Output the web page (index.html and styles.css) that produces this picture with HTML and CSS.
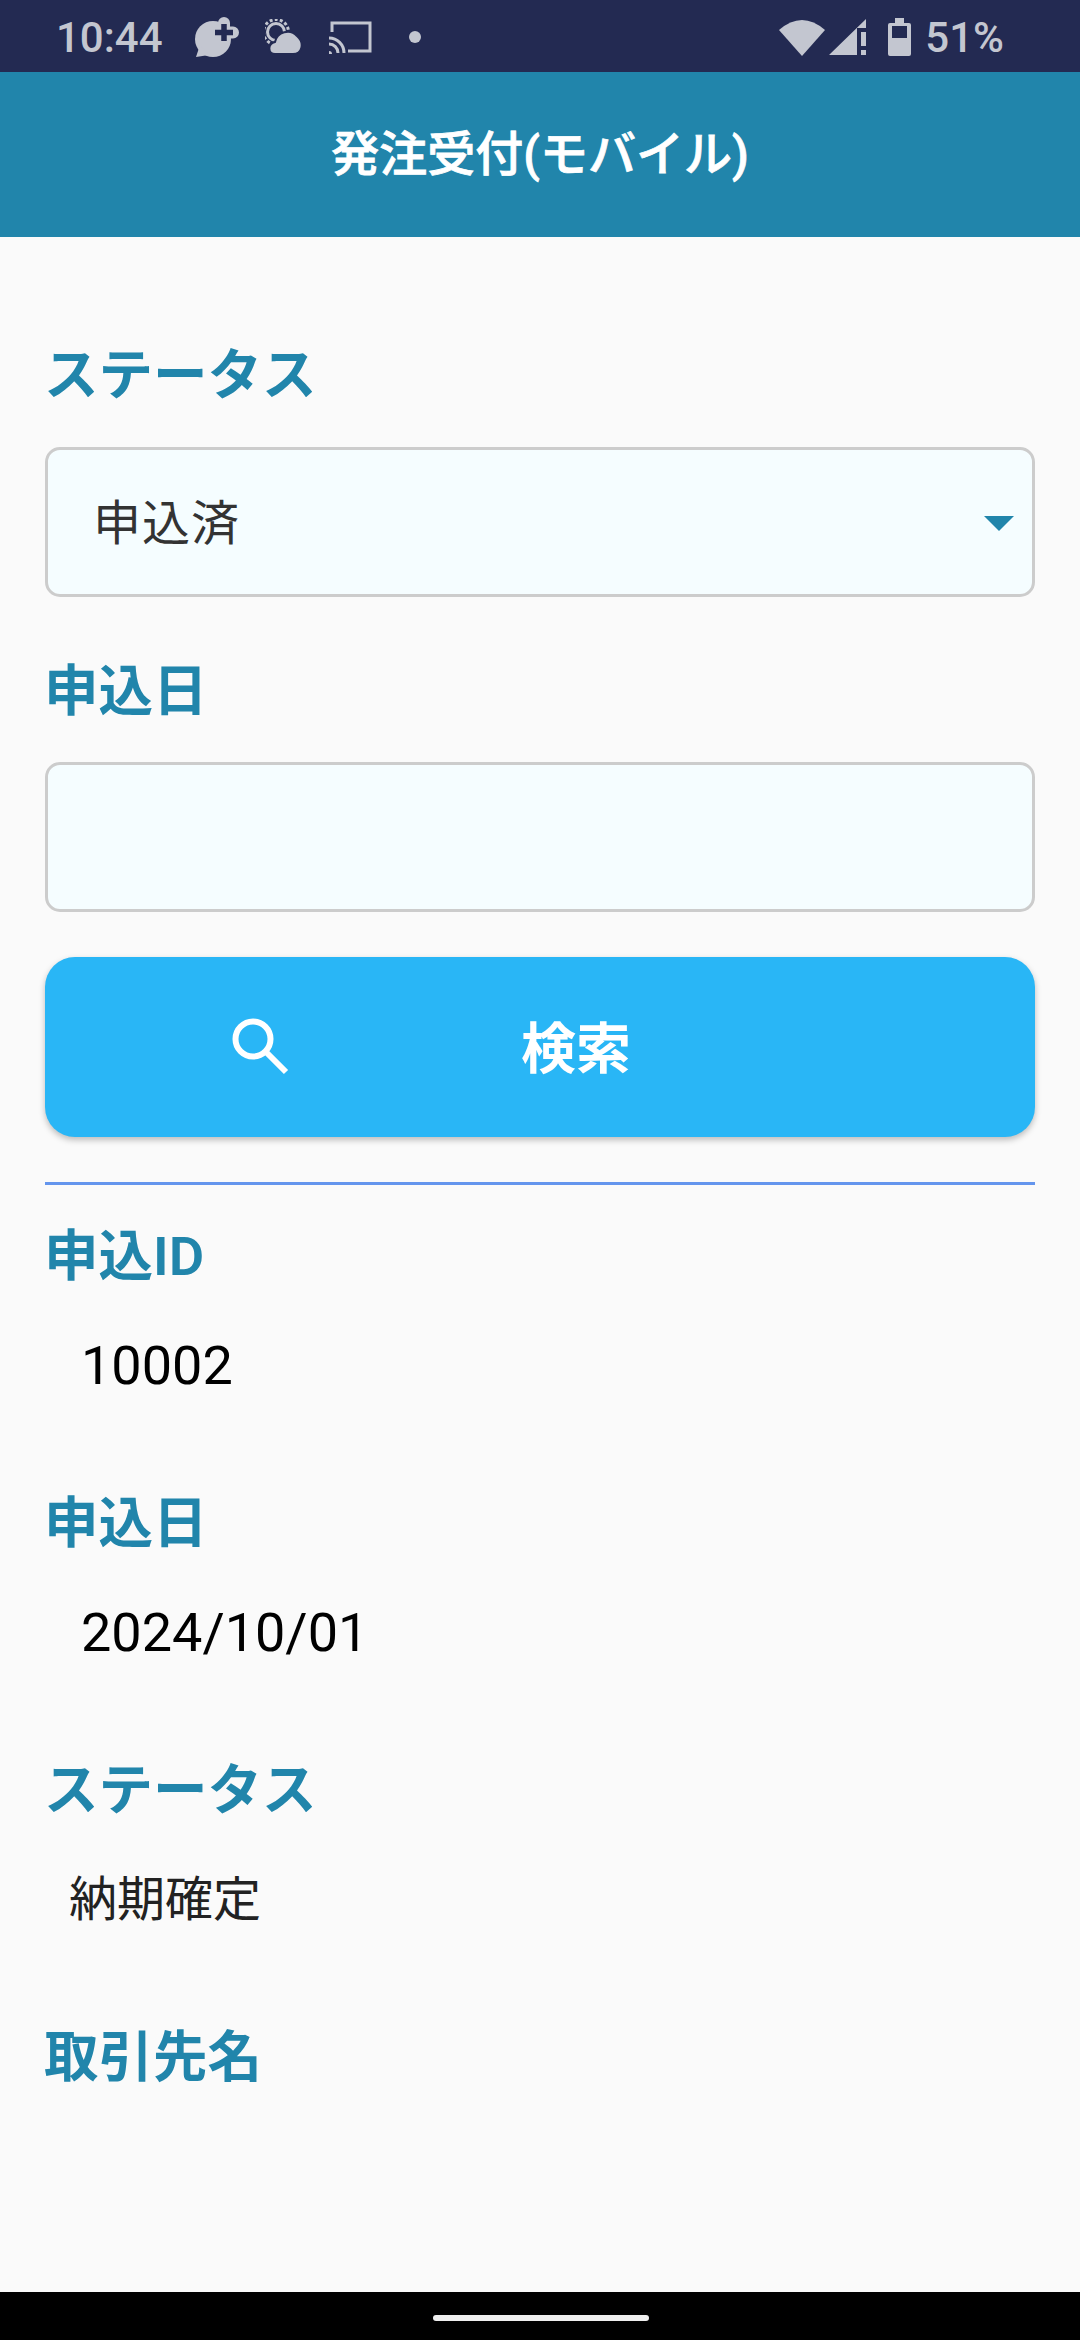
FILE: index.html
```html
<!DOCTYPE html>
<html lang="ja">
<head>
    <meta charset="UTF-8">
    <meta name="viewport" content="width=device-width, initial-scale=1.0">
    <title>発注受付(モバイル)</title>
    <link rel="stylesheet" href="styles.css">
</head>
<body>
    <div class="status-bar">
        <div class="status-left">
            <span class="status-time">10:44</span>
            <svg class="icon-chat" width="44" height="41" viewBox="0 0 44 41">
                <circle cx="18" cy="22" r="18" fill="#c3c6d0"/>
                <path d="M1 40 L5 28 L14 38 Z" fill="#c3c6d0"/>
                <path d="M29 6 V25 M22 15.5 H38" stroke="#c3c6d0" stroke-width="12" stroke-linecap="round" fill="none"/>
                <path d="M29 7 V24 M20 15.5 H38" stroke="#232a52" stroke-width="5.5" fill="none"/>
            </svg>
            <svg class="icon-weather" width="38" height="36" viewBox="0 0 38 36">
                <circle cx="11" cy="13" r="8.5" stroke="#c3c6d0" stroke-width="3" fill="none"/>
                <circle cx="11" cy="13" r="12.5" stroke="#c3c6d0" stroke-width="3" stroke-dasharray="3 2.2" fill="none"/>
                <path d="M10 35 C3 35 2 25 10 23 C12 13 25 9 32 17 C40 24 37 35 28 35 Z" fill="#c3c6d0" stroke="#232a52" stroke-width="2"/>
            </svg>
            <svg class="icon-cast" width="43" height="34" viewBox="0 0 43 34">
                <path d="M3 12 V3 H41 V31 H19" stroke="#c3c6d0" stroke-width="3" fill="none"/>
                <path d="M0 31 A3 3 0 0 1 3 34 H0 Z" fill="#c3c6d0"/>
                <path d="M0 24 A9 9 0 0 1 9 33 M0 18 A15 15 0 0 1 15 33" stroke="#c3c6d0" stroke-width="3" fill="none"/>
            </svg>
            <span class="status-dot"></span>
        </div>
        <div class="status-right">
            <svg class="icon-wifi" width="46" height="38" viewBox="0 0 46 38">
                <path d="M23 38 L0 12 Q23 -8 46 12 Z" fill="#c3c6d0"/>
            </svg>
            <svg class="icon-signal" width="38" height="37" viewBox="0 0 38 37">
                <path d="M0 36 L37 0 V9 H28 V36 Z" fill="#c3c6d0"/>
                <rect x="32" y="13" width="5" height="14" fill="#c3c6d0"/>
                <rect x="32" y="31" width="5" height="5" fill="#c3c6d0"/>
            </svg>
            <svg class="icon-battery" width="23" height="39" viewBox="0 0 23 39">
                <path fill-rule="evenodd" d="M7 0 H16 V5 H21 Q23 5 23 7 V36 Q23 38 21 38 H2 Q0 38 0 36 V7 Q0 5 2 5 H7 Z M4 8 V20 H19 V8 Z" fill="#c3c6d0"/>
            </svg>
            <span class="status-battery">51%</span>
        </div>
    </div>

    <header class="app-bar">発注受付(モバイル)</header>

    <main class="content">
        <div class="form-label first">ステータス</div>
        <div class="field">
            <span class="field-text">申込済</span>
            <span class="field-arrow"></span>
        </div>

        <div class="form-label second">申込日</div>
        <div class="field"></div>

        <button class="search-button">
            <svg class="search-icon" width="60" height="60" viewBox="0 0 60 60">
                <circle cx="23" cy="22" r="17.5" stroke="#fff" stroke-width="6" fill="none"/>
                <path d="M36 35 L56 55" stroke="#fff" stroke-width="6" fill="none"/>
            </svg>
            <span class="search-text">検索</span>
        </button>

        <hr class="divider">

        <div class="detail first-detail">
            <div class="detail-label">申込ID</div>
            <div class="detail-value">10002</div>
        </div>
        <div class="detail">
            <div class="detail-label">申込日</div>
            <div class="detail-value">2024/10/01</div>
        </div>
        <div class="detail">
            <div class="detail-label">ステータス</div>
            <div class="detail-value jp">納期確定</div>
        </div>
        <div class="detail">
            <div class="detail-label">取引先名</div>
        </div>
    </main>

    <footer class="nav-bar">
        <span class="home-pill"></span>
    </footer>
</body>
</html>
```

FILE: styles.css
```css
* {
    box-sizing: border-box;
}

body {
    font-family: Roboto, "Noto Sans CJK JP", sans-serif;
    margin: 0;
    height: 100vh;
    display: flex;
    flex-direction: column;
    background-color: #fafafa;
    overflow: hidden;
}

.status-bar {
    height: 72px;
    flex-shrink: 0;
    background-color: #232a52;
    color: #c3c6d0;
    display: flex;
    justify-content: space-between;
    align-items: center;
    padding: 2px 76px 0 56px;
    font-size: 42px;
    font-weight: 500;
}

.status-left,
.status-right {
    display: flex;
    align-items: center;
}

.status-time {
    margin-right: 32px;
}

.icon-chat {
    margin-right: 26px;
}

.icon-weather {
    margin-right: 26px;
}

.icon-cast {
    margin-right: 37px;
}

.status-dot {
    width: 12px;
    height: 12px;
    border-radius: 50%;
    background-color: #c3c6d0;
}

.icon-wifi {
    margin-right: 4px;
}

.icon-signal {
    margin-right: 21px;
}

.icon-battery {
    margin-right: 14px;
}

.app-bar {
    height: 165px;
    flex-shrink: 0;
    background-color: #2185ab;
    color: #ffffff;
    font-size: 48px;
    font-weight: 500;
    -webkit-text-stroke: 0.8px #ffffff;
    display: flex;
    justify-content: center;
    align-items: center;
    padding-bottom: 9px;
}

.content {
    flex: 1;
    padding: 0 45px;
    overflow: hidden;
}

.form-label,
.detail-label {
    color: #2185ab;
    font-size: 54.5px;
    font-weight: 600;
    line-height: 72px;
    margin-left: -1px;
}

.form-label.first {
    margin-top: 102px;
    margin-bottom: 36px;
}

.form-label.second {
    margin-top: 58px;
    margin-bottom: 35px;
}

.field {
    height: 150px;
    background-color: #f5fdff;
    border: 3px solid #cccccc;
    border-radius: 15px;
    display: flex;
    justify-content: space-between;
    align-items: center;
    padding: 0 18px 0 45px;
}

.field-text {
    font-size: 48px;
    letter-spacing: 1px;
    color: #333333;
    padding-bottom: 6px;
}

.field-arrow {
    width: 0;
    height: 0;
    border-left: 15px solid transparent;
    border-right: 15px solid transparent;
    border-top: 15px solid #2185ab;
    margin-top: 2px;
}

.search-button {
    width: 100%;
    height: 180px;
    margin-top: 45px;
    background-color: #29b6f6;
    color: #ffffff;
    border: none;
    border-radius: 30px;
    box-shadow: 0 3px 6px rgba(0, 0, 0, 0.25);
    font-family: inherit;
    font-size: 55px;
    font-weight: 600;
    display: flex;
    align-items: center;
    padding: 0 0 0 185px;
    gap: 231px;
}

.search-text {
    padding-bottom: 6px;
}

.divider {
    height: 3px;
    margin: 45px 0 0;
    border: none;
    background-color: #6495ed;
}

.detail {
    margin-top: 85px;
}

.detail.first-detail {
    margin-top: 35px;
}

.detail-value {
    margin-top: 38px;
    padding-left: 36px;
    font-size: 54px;
    line-height: 72px;
    color: #000000;
}

.detail-value.jp {
    padding-left: 24px;
    font-size: 48px;
    color: #222222;
}

.nav-bar {
    height: 48px;
    flex-shrink: 0;
    background-color: #000000;
    display: flex;
    justify-content: center;
    padding-top: 23px;
}

.home-pill {
    width: 216px;
    height: 6px;
    margin-left: 2px;
    border-radius: 3px;
    background-color: #eeeeee;
}
```
